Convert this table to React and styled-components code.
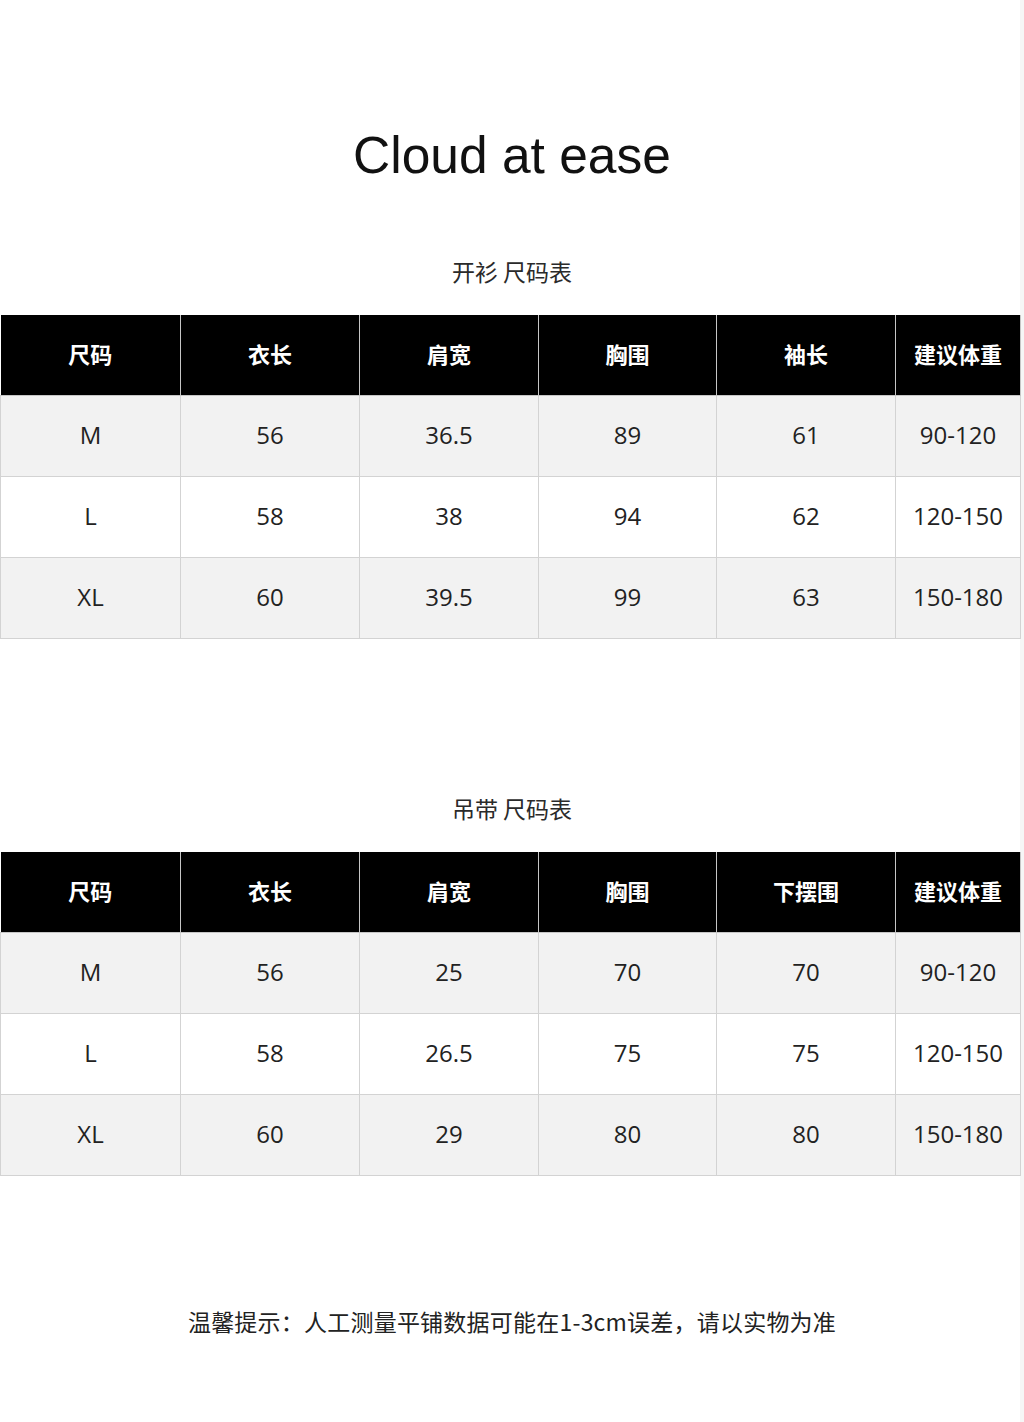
import React from 'react'
import styled, { createGlobalStyle } from 'styled-components'

const GlobalStyle = createGlobalStyle`
  html, body {
    margin: 0;
    padding: 0;
    background: #ffffff;
  }
`

const cols = [180, 179, 179, 178, 179, 125]

const cardigan = {
  title: '开衫 尺码表',
  heads: ['尺码', '衣长', '肩宽', '胸围', '袖长', '建议体重'],
  rows: [
    ['M', '56', '36.5', '89', '61', '90-120'],
    ['L', '58', '38', '94', '62', '120-150'],
    ['XL', '60', '39.5', '99', '63', '150-180'],
  ],
}

const camisole = {
  title: '吊带 尺码表',
  heads: ['尺码', '衣长', '肩宽', '胸围', '下摆围', '建议体重'],
  rows: [
    ['M', '56', '25', '70', '70', '90-120'],
    ['L', '58', '26.5', '75', '75', '120-150'],
    ['XL', '60', '29', '80', '80', '150-180'],
  ],
}

function SizeTable({ data }) {
  return (
    <>
      <SubTitle>{data.title}</SubTitle>
      <Table>
        <colgroup>
          {cols.map((w, i) => (
            <col key={i} style={{ width: w }} />
          ))}
        </colgroup>
        <thead>
          <tr>
            {data.heads.map((h) => (
              <HeadCell key={h}>{h}</HeadCell>
            ))}
          </tr>
        </thead>
        <tbody>
          {data.rows.map((r, i) => (
            <Row key={r[0]} $shaded={i !== 1}>
              {r.map((v, j) => (
                <Cell key={j}>{v}</Cell>
              ))}
            </Row>
          ))}
        </tbody>
      </Table>
    </>
  )
}

export default function App() {
  return (
    <Page>
      <GlobalStyle />
      <Title>Cloud at ease</Title>
      <SizeTable data={cardigan} />
      <Spacer />
      <SizeTable data={camisole} />
      <Note>温馨提示：人工测量平铺数据可能在1-3cm误差，请以实物为准</Note>
    </Page>
  )
}

const Page = styled.div`
  width: 1024px;
  min-height: 1422px;
  background: linear-gradient(to right, #ffffff 1020px, #f6f6f6 1020px);
  display: flex;
  flex-direction: column;
  align-items: stretch;
  padding-top: 125px;
  box-sizing: border-box;
`

const Title = styled.h1`
  margin: 0 0 71px;
  height: 60px;
  line-height: 60px;
  text-align: center;
  font-family: 'Liberation Sans', Arial, sans-serif;
  font-weight: 400;
  font-size: 51.5px;
  color: #111111;
`

const SubTitle = styled.div`
  height: 30px;
  line-height: 30px;
  margin-bottom: 29px;
  text-align: center;
  font-family: 'Noto Sans CJK SC', sans-serif;
  font-size: 23px;
  color: #2a2a2a;
`

const Spacer = styled.div`
  height: 154px;
`

const Table = styled.table`
  width: 1020px;
  table-layout: fixed;
  border-collapse: collapse;
`

const HeadCell = styled.th`
  height: 76px;
  padding: 0 0 4px;
  background: #000000;
  color: #ffffff;
  border: 1px solid #c6c6c6;
  border-top: none;
  font-family: 'Noto Sans CJK SC', sans-serif;
  font-weight: 700;
  font-size: 22px;
  text-align: center;
  &:first-child {
    border-left: none;
  }
`

const Row = styled.tr`
  background: ${(p) => (p.$shaded ? '#f2f2f2' : '#ffffff')};
`

const Cell = styled.td`
  height: 77px;
  padding: 0 0 3px;
  border: 1px solid #d3d3d3;
  text-align: center;
  font-family: 'Open Sans', 'Noto Sans', sans-serif;
  font-size: 24px;
  color: #222222;
`

const Note = styled.div`
  margin-top: 130px;
  height: 30px;
  line-height: 30px;
  text-align: center;
  font-family: 'Noto Sans CJK SC', sans-serif;
  font-size: 23px;
  letter-spacing: 0.22px;
  color: #222222;
`
